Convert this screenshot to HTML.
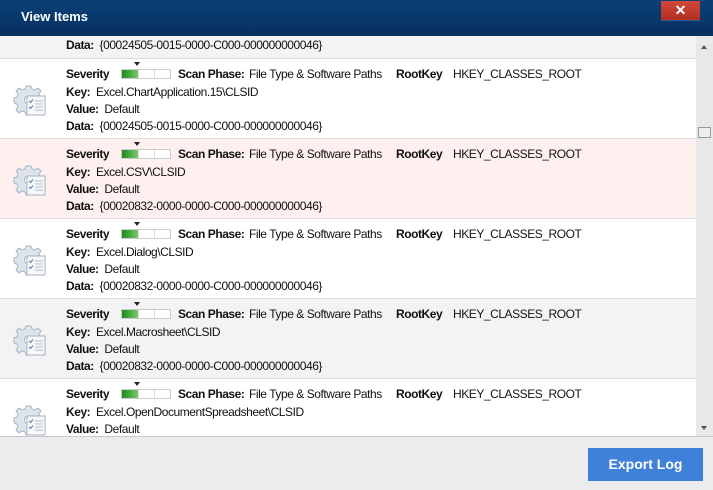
<!DOCTYPE html><html><head><style>
*{margin:0;padding:0;box-sizing:border-box}
body{width:713px;height:490px;overflow:hidden;font-family:"Liberation Sans",sans-serif;font-size:12px;color:#111;background:#ececec;position:relative}
.t{position:absolute;white-space:nowrap;letter-spacing:-0.45px}
b{font-weight:bold}
#title{position:absolute;left:0;top:0;width:713px;height:36px;background:linear-gradient(#0b4178,#06305f);}
#title span{position:absolute;left:21px;top:9px;color:#fff;font-weight:bold;font-size:13px}
#close{position:absolute;left:661px;top:1px;width:39px;height:20px;background:linear-gradient(#d0493a,#b32f22);border-bottom:1px solid #2a5aa0;color:#fff;text-align:center;font-weight:bold;font-size:14px;line-height:19px}
#list{position:absolute;left:0;top:36px;width:713px;height:401px;background:#fff;overflow:hidden;border-bottom:1px solid #c8c8c8}
.row{position:absolute;left:0;width:696px;height:80px;border-bottom:1px solid #dcdcdc}
#sb{position:absolute;left:696px;top:0;width:17px;height:401px;background:#e8e8e8}
.bar{position:absolute;width:50px;height:10px;border:1px solid #ccc;background:#fff}
.bar i{position:absolute;left:0;top:0;width:16px;height:8px;background:linear-gradient(90deg,#1e8a1e,#7cc96a)}
.bar u{position:absolute;top:0;width:1px;height:8px;background:#ddd}
.tri{position:absolute;width:0;height:0;border-left:3px solid transparent;border-right:3px solid transparent;border-top:4px solid #222}
#btn{position:absolute;left:588px;top:448px;width:115px;height:33px;background:#3f80d8;color:#fff;font-weight:bold;font-size:14px;text-align:center;line-height:33px}
</style></head><body>
<div id="title"><span>View Items</span><div id="close">✕</div></div>
<div id="list">
<div class="row" style="top:-57px;background:#f3f3f3"><div class="t" style="left:66px;top:59px"><b>Data:</b>&nbsp; {00024505-0015-0000-C000-000000000046}</div></div>
<div class="row" style="top:23px;background:#fff" id="r1"></div>
<div class="row" style="top:103px;background:#fdf0ef" id="r2"></div>
<div class="row" style="top:183px;background:#fff" id="r3"></div>
<div class="row" style="top:263px;background:#f3f3f3" id="r4"></div>
<div class="row" style="top:343px;background:#fff" id="r5"></div>
<div id="sb"><div style="position:absolute;left:5px;top:9px;border-left:3px solid transparent;border-right:3px solid transparent;border-bottom:4px solid #555"></div><div style="position:absolute;left:2px;top:91px;width:13px;height:11px;border:1px solid #999;background:#eee"></div><div style="position:absolute;left:5px;top:390px;border-left:3px solid transparent;border-right:3px solid transparent;border-top:4px solid #555"></div></div>
</div>
<div id="btn">Export Log</div>
<script>
var d=[["Excel.ChartApplication.15\\CLSID","{00024505-0015-0000-C000-000000000046}"],["Excel.CSV\\CLSID","{00020832-0000-0000-C000-000000000046}"],["Excel.Dialog\\CLSID","{00020832-0000-0000-C000-000000000046}"],["Excel.Macrosheet\\CLSID","{00020832-0000-0000-C000-000000000046}"],["Excel.OpenDocumentSpreadsheet\\CLSID",""]];
var icon='<svg style="position:absolute;left:12px;top:24px" width="36" height="34" viewBox="0 0 36 34"><g fill="#dde3ea" stroke="#a9b5c4" stroke-width="1"><path d="M14 3h5l1 3 3 1 3-2 3 3-2 3 1 3 3 1v5l-3 1-1 3 2 3-3 3-3-2-3 1-1 3h-5l-1-3-3-1-3 2-3-3 2-3-1-3-3-1v-5l3-1 1-3-2-3 3-3 3 2 3-1z"/></g><circle cx="16.5" cy="17" r="4" fill="#fff" stroke="#a9b5c4"/><rect x="15" y="13" width="18" height="19" fill="#f7f9fc" stroke="#a4afbd"/><g stroke="#5a8ac8" stroke-width="1.2" fill="none"><path d="M17 18l1.5 1.5 2.5-3M17 24l1.5 1.5 2.5-3"/></g><g stroke="#b0bac6"><path d="M23 18h8M23 21h8M23 24h8M23 27h8"/></g></svg>';
for(var i=0;i<5;i++){var r=document.getElementById('r'+(i+1));
r.innerHTML=icon+'<div class="tri" style="left:134px;top:3px"></div><div class="bar" style="left:121px;top:10px"><i></i><u style="left:16px"></u><u style="left:32px"></u></div>'+
'<div class="t" style="left:66px;top:8px"><b>Severity</b></div><div class="t" style="left:178px;top:8px"><b>Scan Phase:</b></div><div class="t" style="left:249px;top:8px">File Type &amp; Software Paths</div><div class="t" style="left:396px;top:8px"><b>RootKey</b></div><div class="t" style="left:453px;top:8px">HKEY_CLASSES_ROOT</div>'+
'<div class="t" style="left:66px;top:26px"><b>Key:</b>&nbsp; '+d[i][0]+'</div><div class="t" style="left:66px;top:43px"><b>Value:</b>&nbsp; Default</div>'+(d[i][1]?'<div class="t" style="left:66px;top:60px"><b>Data:</b>&nbsp; '+d[i][1]+'</div>':'');}
</script>
</body></html>
